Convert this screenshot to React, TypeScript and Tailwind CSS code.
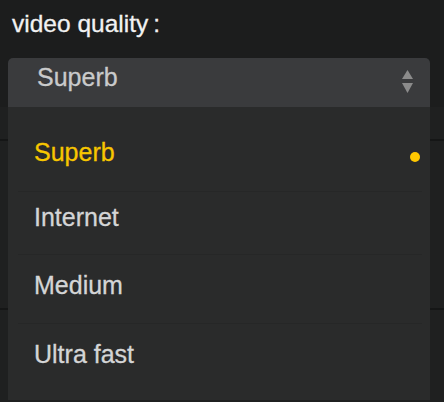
const options = [
  { label: "Superb", h: "h-[85px]", pt: "pt-[31px]", selected: true },
  { label: "Internet", h: "h-[63px]", pt: "pt-[11px]", selected: false },
  { label: "Medium", h: "h-[69px]", pt: "pt-[16px]", selected: false },
  { label: "Ultra fast", h: "h-[76px]", pt: "pt-[16px]", selected: false, last: true },
];

function SortArrows() {
  return (
    <svg width="11" height="23" viewBox="0 0 11 23" className="mt-[12px] shrink-0">
      <path d="M5.5 0 L11 9 L0 9 Z" fill="#8b8b8b" />
      <path d="M0 13 L11 13 L5.5 23 Z" fill="#8b8b8b" />
    </svg>
  );
}

export default function App() {
  return (
    <div className="relative h-[402px] w-[444px] overflow-hidden bg-[#1c1d1d] font-['Liberation_Sans',Arial,sans-serif]">
      <div className="px-[12px] pt-[10px] text-[24.5px] leading-[28px] text-[#f2f2f2] [-webkit-text-stroke:0.3px_#f2f2f2]">
        video quality<span className="ml-[5px]">:</span>
      </div>

      {/* select */}
      <div className="ml-[8px] mr-[14px] mt-[20px] flex h-[49px] items-start justify-between rounded-t-[5px] bg-[#3a3b3d] pl-[29px] pr-[17px]">
        <span className="pt-[5px] text-[25px] leading-[28px] text-[#c9cacb] [-webkit-text-stroke:0.3px_#c9cacb]">
          Superb
        </span>
        <SortArrows />
      </div>

      {/* list behind the menu */}
      <div className="flex flex-col bg-[#1f2020]">
        <div className="h-[34px] border-b-2 border-[#151616]" />
        <div className="h-[169px] border-b-2 border-[#151616]" />
        <div className="h-[100px]" />
      </div>

      {/* open menu */}
      <div className="absolute left-[8px] top-[107px] flex h-[293px] w-[422px] flex-col bg-[#2a2b2b]">
        {options.map((o) => (
          <div key={o.label} className={`${o.h} flex shrink-0 flex-col`}>
            <div className={`flex flex-1 items-start justify-between pl-[26px] pr-[10px] ${o.pt}`}>
              <span
                className={`text-[25px] leading-[28px] ${
                  o.selected
                    ? "text-[#f7c600] [-webkit-text-stroke:0.3px_#f7c600]"
                    : "text-[#d4d5d6] [-webkit-text-stroke:0.3px_#d4d5d6]"
                }`}
              >
                {o.label}
              </span>
              {o.selected && <span className="mt-[14px] h-[10px] w-[10px] rounded-full bg-[#ffc800]" />}
            </div>
            {!o.last && <div className="ml-[10px] mr-[8px] h-px bg-[#262727]" />}
          </div>
        ))}
      </div>
    </div>
  );
}
